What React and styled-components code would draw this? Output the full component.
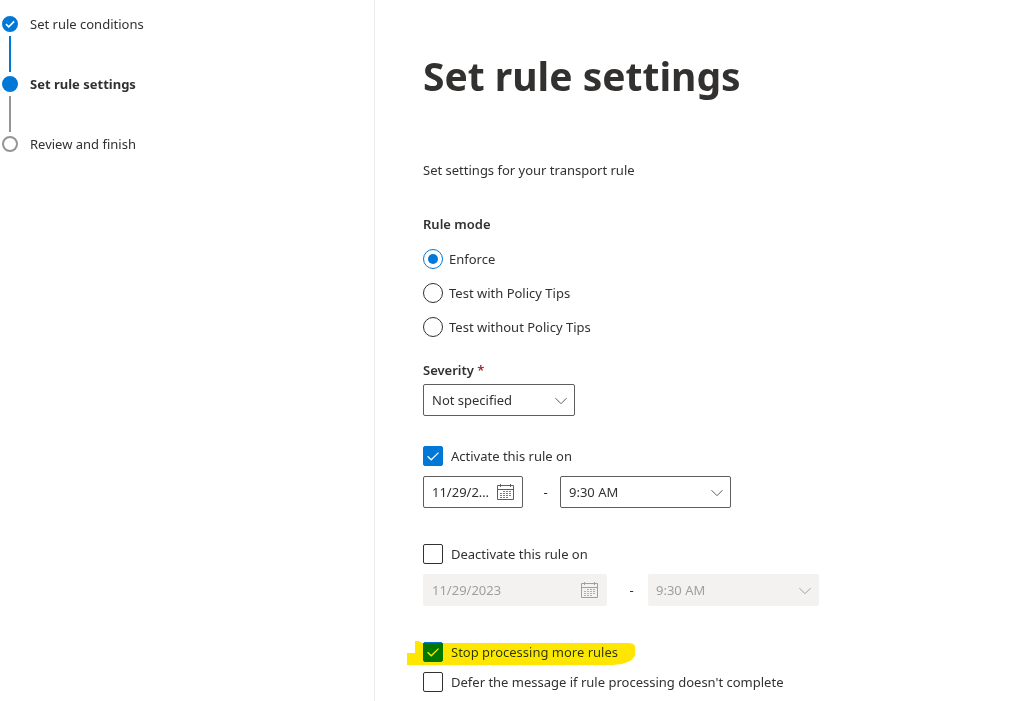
import React from "react";
import styled, { createGlobalStyle, css } from "styled-components";

const Global = createGlobalStyle`
  *, *::before, *::after { box-sizing: border-box; }
  body {
    margin: 0;
    background: #fff;
    color: #323130;
    font-family: "Segoe UI", "Noto Sans", sans-serif;
    font-size: 13px;
    line-height: 20px;
  }
  #root { display: flex; min-height: 100vh; }
`;

const Page = styled.div`
  flex: 1;
  display: grid;
  grid-template-columns: minmax(180px, 375px) 1fr;
`;

const Sidebar = styled.nav`
  border-right: 1px solid #edebe9;
  padding-top: 14px;
`;

const StepList = styled.ol`
  list-style: none;
  margin: 0;
  padding: 0 0 0 2px;
`;

const Step = styled.li`
  display: flex;
  gap: 12px;
  font-weight: ${(p) => (p.$current ? 700 : 400)};
`;

const Track = styled.span`
  display: flex;
  flex-direction: column;
  align-items: center;
  gap: 4px;
  width: 16px;
  height: ${(p) => (p.$last ? "20px" : "60px")};
  padding: 2px 0;
`;

const Dot = styled.span`
  flex: none;
  display: flex;
  width: 16px;
  height: 16px;
  border-radius: 50%;
  border: 2px solid ${(p) => (p.$state === "todo" ? "#979593" : "#0078d7")};
  background: ${(p) => (p.$state === "todo" ? "#fff" : "#0078d7")};
`;

const Connector = styled.span`
  flex: 1;
  width: 2px;
  background: ${(p) => (p.$done ? "#0078d7" : "#979593")};
`;

const Main = styled.main`
  padding: 48px 48px 0;
`;

const Title = styled.h1`
  margin: 0 0 56px;
  font-family: "Segoe UI", "Noto Sans", sans-serif;
  font-size: 39px;
  line-height: 56px;
  font-weight: 700;
`;

const Intro = styled.p`
  margin: 0 0 34px;
`;

const Fieldset = styled.fieldset`
  border: 0;
  margin: 0 0 23px;
  padding: 0;
`;

const caption = css`
  display: block;
  padding: 0;
  font-weight: 600;
`;

const Legend = styled.legend`
  ${caption}
  margin-bottom: 15px;
`;

const Caption = styled.label`
  ${caption}
  margin-bottom: 4px;
`;

const Required = styled.span`
  color: #a4262c;
`;

const Options = styled.div`
  display: flex;
  flex-direction: column;
  gap: 14px;
`;

const Choice = styled.label`
  display: flex;
  align-items: center;
  gap: ${(p) => (p.$radio ? "6px" : "8px")};
  width: fit-content;
`;

const Radio = styled.input`
  appearance: none;
  display: grid;
  place-items: center;
  flex: none;
  width: 20px;
  height: 20px;
  margin: 0;
  border: 1px solid #323130;
  border-radius: 50%;
  &:checked { border-color: #0078d7; }
  &:checked::before {
    content: "";
    width: 10px;
    height: 10px;
    border-radius: 50%;
    background: #0078d7;
  }
`;

const CheckShell = styled.span`
  display: grid;
  flex: none;
  width: 20px;
  height: 20px;
  > * { grid-area: 1 / 1; }
  svg { place-self: center; pointer-events: none; }
`;

const CheckInput = styled.input`
  appearance: none;
  width: 20px;
  height: 20px;
  margin: 0;
  border: 1px solid #323130;
  border-radius: 2px;
  &:checked { border-color: #0078d7; background: #0078d7; }
  &:not(:checked) + svg { visibility: hidden; }
`;

const Block = styled.section`
  margin-bottom: ${(p) => p.$gap || 0}px;
`;

const Row = styled.div`
  display: flex;
  align-items: center;
  margin-top: 10px;
`;

const Dash = styled.span`
  width: ${(p) => p.$width}px;
  padding-left: 8px;
  text-align: center;
`;

const Box = styled.div`
  display: grid;
  grid-template-columns: 1fr auto;
  align-items: center;
  width: ${(p) => p.$width}px;
  height: 32px;
  border: 1px solid ${(p) => (p.$off ? "#f3f2f1" : "#605e5c")};
  border-radius: 2px;
  background: ${(p) => (p.$off ? "#f3f2f1" : "#fff")};
  color: ${(p) => (p.$off ? "#a19f9d" : "#605e5c")};
  padding-right: ${(p) => (p.$date ? 8 : 6)}px;
  > select, > input { grid-area: 1 / 1 / 2 / 3; }
  > svg { grid-area: 1 / 2; pointer-events: none; }
`;

const field = css`
  appearance: none;
  width: 100%;
  height: 30px;
  border: 0;
  margin: 0;
  background: transparent;
  font: inherit;
  color: #323130;
  opacity: 1;
  &:disabled { color: #a19f9d; }
`;

const Select = styled.select`
  ${field}
  padding: 0 24px 0 ${(p) => (p.disabled ? 7 : 8)}px;
`;

const DateInput = styled.input`
  ${field}
  padding: 0;
  border-left: 8px solid transparent;
  border-right: 22px solid transparent;
  text-overflow: ellipsis;
`;

const Marked = styled.div`
  position: relative;
  width: fit-content;
  margin-bottom: 10px;
`;

const Marker = styled.svg`
  position: absolute;
  left: -16px;
  top: -2px;
  mix-blend-mode: darken;
  pointer-events: none;
`;

const Tick = ({ bold }) => (
  <svg width="12" height="12" viewBox="0 0 12 12" fill="none" stroke="#fff" strokeWidth={bold ? 1.6 : 1.2}>
    <path d={bold ? "M2 6.2 4.7 8.8 10.2 3.4" : "M.6 6.3 4.2 9.8 11.5 2.6"} />
  </svg>
);

const Chevron = () => (
  <svg width="14" height="12" viewBox="0 0 14 12" fill="none" stroke="currentColor">
    <path d="M1.5 4.2 7 9.7 12.5 4.2" />
  </svg>
);

const Calendar = () => (
  <svg width="17" height="16" viewBox="0 0 17 16" fill="none" stroke="currentColor">
    <path d="M.5 1.5h16v14H.5zM.5 5.5h16M3.5 0v3M13.5 0v3" />
    <path d="M6 7.5h8M3 9.5h11M3 11.5h11M3 13.5h8" strokeDasharray="2 1" strokeOpacity=".8" />
  </svg>
);

function Check({ label, checked }) {
  return (
    <Choice>
      <CheckShell>
        <CheckInput type="checkbox" defaultChecked={checked} />
        <Tick />
      </CheckShell>
      {label}
    </Choice>
  );
}

function Dropdown({ id, label, value, width, disabled }) {
  return (
    <Box $width={width} $off={disabled}>
      <Select id={id} aria-label={label} disabled={disabled} defaultValue={value}>
        <option>{value}</option>
      </Select>
      <Chevron />
    </Box>
  );
}

function DateBox({ label, value, width, disabled }) {
  return (
    <Box $width={width} $off={disabled} $date>
      <DateInput type="text" aria-label={label} defaultValue={value} disabled={disabled} />
      <Calendar />
    </Box>
  );
}

const steps = [
  { label: "Set rule conditions", state: "done" },
  { label: "Set rule settings", state: "current" },
  { label: "Review and finish", state: "todo" },
];

const modes = ["Enforce", "Test with Policy Tips", "Test without Policy Tips"];

export default function App() {
  return (
    <>
      <Global />
      <Page>
        <Sidebar aria-label="Steps">
          <StepList>
            {steps.map((s, i) => (
              <Step key={s.label} $current={s.state === "current"}>
                <Track $last={i === steps.length - 1}>
                  <Dot $state={s.state}>{s.state === "done" && <Tick bold />}</Dot>
                  {i < steps.length - 1 && <Connector $done={s.state === "done"} />}
                </Track>
                {s.label}
              </Step>
            ))}
          </StepList>
        </Sidebar>
        <Main>
          <Title>Set rule settings</Title>
          <Intro>Set settings for your transport rule</Intro>
          <Fieldset>
            <Legend>Rule mode</Legend>
            <Options>
              {modes.map((m, i) => (
                <Choice key={m} $radio>
                  <Radio type="radio" name="mode" defaultChecked={i === 0} />
                  {m}
                </Choice>
              ))}
            </Options>
          </Fieldset>
          <Block $gap={30}>
            <Caption htmlFor="severity">
              Severity <Required>*</Required>
            </Caption>
            <Dropdown id="severity" value="Not specified" width={152} />
          </Block>
          <Block $gap={36}>
            <Check label="Activate this rule on" checked />
            <Row>
              <DateBox label="Activation date" value="11/29/2023" width={100} />
              <Dash $width={37}>-</Dash>
              <Dropdown label="Activation time" value="9:30 AM" width={171} />
            </Row>
          </Block>
          <Block $gap={36}>
            <Check label="Deactivate this rule on" />
            <Row>
              <DateBox label="Deactivation date" value="11/29/2023" width={184} disabled />
              <Dash $width={41}>-</Dash>
              <Dropdown label="Deactivation time" value="9:30 AM" width={171} disabled />
            </Row>
          </Block>
          <Block>
            <Marked>
              <Check label="Stop processing more rules" checked />
              <Marker width="230" height="26" viewBox="0 0 230 26" fill="#ffe600" aria-hidden="true">
                <path d="M8 1 12 1 15 3 221 3Q227 3 228 6V15Q227 20 218 23Q212 25 200 25H0V13H8Z" />
              </Marker>
            </Marked>
            <Check label="Defer the message if rule processing doesn't complete" />
          </Block>
        </Main>
      </Page>
    </>
  );
}
